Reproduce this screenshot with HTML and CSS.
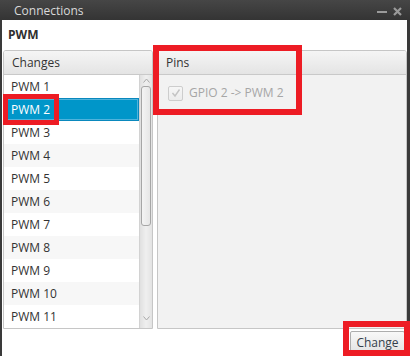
FILE: index.html
```html
<!DOCTYPE html>
<html lang="en">
<head>
<meta charset="utf-8">
<title>Connections</title>
<link rel="stylesheet" href="styles.css">
</head>
<body>
<div class="window">
  <div class="titlebar">
    <span class="title">Connections</span>
    <div class="controls">
      <svg class="ctl-min" width="10" height="9" viewBox="0 0 10 9"><rect x="0" y="4" width="10" height="2" fill="#9a9a9a"/></svg>
      <svg class="ctl-close" width="9" height="9" viewBox="0 0 9 9"><path d="M1 1 L8 8 M8 1 L1 8" stroke="#9a9a9a" stroke-width="2.2" fill="none"/></svg>
    </div>
  </div>
  <div class="content">
    <div class="label">PWM</div>
    <div class="panels">
      <section class="panel panel-changes">
        <div class="panel-header">Changes</div>
        <div class="list-body">
          <ul class="list">
            <li class="row">PWM 1</li>
            <li class="row selected">PWM 2</li>
            <li class="row">PWM 3</li>
            <li class="row alt">PWM 4</li>
            <li class="row">PWM 5</li>
            <li class="row alt">PWM 6</li>
            <li class="row">PWM 7</li>
            <li class="row alt">PWM 8</li>
            <li class="row">PWM 9</li>
            <li class="row alt">PWM 10</li>
            <li class="row">PWM 11</li>
          </ul>
          <div class="scrollbar">
            <div class="sb-btn">
              <svg width="7" height="5" viewBox="0 0 7 5"><path d="M0.5 4.5 L3.5 1 L6.5 4.5" stroke="#a8a8a8" stroke-width="1" fill="none"/></svg>
            </div>
            <div class="sb-track"><div class="sb-thumb"></div></div>
            <div class="sb-btn sb-down">
              <svg width="7" height="5" viewBox="0 0 7 5"><path d="M0.5 0.5 L3.5 4 L6.5 0.5" stroke="#a8a8a8" stroke-width="1" fill="none"/></svg>
            </div>
          </div>
        </div>
      </section>
      <section class="panel panel-pins">
        <div class="panel-header">Pins</div>
        <div class="pins-body">
          <div class="check-row">
            <span class="checkbox">
              <svg width="12" height="12" viewBox="0 0 12 12"><path d="M2.5 6 L5 9 L9.5 2.5" stroke="#c4c4c4" stroke-width="1.4" fill="none"/></svg>
            </span>
            <span class="check-text">GPIO 2 -&gt; PWM 2</span>
          </div>
        </div>
      </section>
    </div>
    <div class="footer">
      <button class="btn">Change</button>
    </div>
  </div>
  <div class="mark mark-item"></div>
  <div class="mark mark-pins"></div>
  <div class="mark mark-btn"></div>
</div>
</body>
</html>
```

FILE: styles.css
```css
* { box-sizing: border-box; }
html, body { margin: 0; padding: 0; }
body {
  width: 410px;
  height: 356px;
  overflow: hidden;
  font-family: "Open Sans", "Noto Sans", sans-serif;
  font-size: 12px;
  color: #333;
  background: #fff;
}
.window {
  position: relative;
  width: 410px;
  height: 356px;
  background: #3a3a3a;
  display: flex;
  flex-direction: column;
}
.titlebar {
  height: 20px;
  flex: 0 0 20px;
  display: flex;
  align-items: center;
  padding: 1px 8px 0 14px;
  background: linear-gradient(#464646, #343434);
}
.title {
  flex: 1;
  color: #d9d9d9;
  font-size: 12px;
  line-height: 19px;
}
.controls {
  display: flex;
  align-items: center;
  gap: 6px;
  margin-top: 2px;
}
.controls svg { display: block; }
.content {
  flex: 1;
  margin: 0 3px 2px 2px;
  background: #fff;
  display: flex;
  flex-direction: column;
}
.label {
  flex: 0 0 30px;
  padding: 7px 6px 7px 6px;
  font-weight: 700;
  line-height: 16px;
  color: #2f2f2f;
}
.panels {
  flex: 1;
  display: flex;
  gap: 4px;
  padding-left: 1px;
  min-height: 0;
}
.panel {
  border: 1px solid #c6c6c6;
  border-radius: 3px 3px 0 0;
  display: flex;
  flex-direction: column;
  overflow: hidden;
}
.panel-changes { width: 150px; }
.panel-pins { flex: 1; }
.panel-header {
  flex: 0 0 24px;
  height: 24px;
  line-height: 23px;
  padding-left: 8px;
  border-bottom: 1px solid #c9c9c9;
  background: linear-gradient(#f5f5f5, #e4e4e4);
  color: #333;
}
.list-body {
  flex: 1;
  display: flex;
  min-height: 0;
  overflow: hidden;
}
.list {
  flex: 1;
  margin: 0;
  padding: 0;
  list-style: none;
  overflow: hidden;
  background: #fff;
}
.row {
  height: 23px;
  line-height: 23px;
  padding-left: 7px;
  color: #333;
}
.row.alt { background: #f7f7f7; }
.row.selected {
  background: #0096c9;
  color: #fff;
  box-shadow: inset 0 0 0 1px #0a88bd, inset 0 0 0 2px #4fb3dc;
}
.scrollbar {
  flex: 0 0 13px;
  display: flex;
  flex-direction: column;
  border-left: 1px solid #d2d2d2;
  background: linear-gradient(to right, #e0e0e0, #efefef 50%, #e3e3e3);
}
.sb-btn {
  flex: 0 0 11px;
  display: flex;
  align-items: center;
  justify-content: center;
}
.sb-btn svg { display: block; }
.sb-down { flex-basis: 12px; align-items: flex-start; padding-top: 0; }
.sb-track {
  flex: 1;
  padding: 0 1px 0 1px;
}
.sb-thumb {
  height: 140px;
  border: 1px solid #a6a6a6;
  border-radius: 3px;
  background: linear-gradient(to right, #f4f4f4, #e6e6e6);
}
.pins-body {
  flex: 1;
  background: #f2f2f2;
  padding: 10px 10px 0 10px;
}
.check-row {
  display: flex;
  align-items: center;
  gap: 6px;
  height: 16px;
}
.checkbox {
  width: 15px;
  height: 15px;
  border: 1px solid #cdcdcd;
  border-radius: 2px;
  background: linear-gradient(#f6f6f6, #ececec);
  display: flex;
  align-items: center;
  justify-content: center;
}
.checkbox svg { display: block; }
.check-text {
  color: #a6a6a6;
  line-height: 16px;
}
.footer {
  flex: 0 0 28px;
  display: flex;
  justify-content: flex-end;
  align-items: flex-start;
  padding: 2px 2px 0 0;
}
.btn {
  width: 55px;
  height: 23px;
  padding: 0;
  border: 1px solid #adadad;
  border-radius: 2px;
  background: linear-gradient(#f8f8f8, #e3e3e3);
  font-family: "Open Sans", "Noto Sans", sans-serif;
  font-size: 12px;
  color: #34404c;
}
.mark {
  position: absolute;
  border-style: solid;
  border-color: #ed1c24;
  pointer-events: none;
}
.mark-item {
  left: 3px;
  top: 94px;
  width: 56px;
  height: 31px;
  border-width: 5px;
}
.mark-pins {
  left: 153px;
  top: 45px;
  width: 149px;
  height: 70px;
  border-width: 6px;
}
.mark-btn {
  left: 343px;
  top: 321px;
  width: 67px;
  height: 35px;
  border-width: 6px;
}
```
